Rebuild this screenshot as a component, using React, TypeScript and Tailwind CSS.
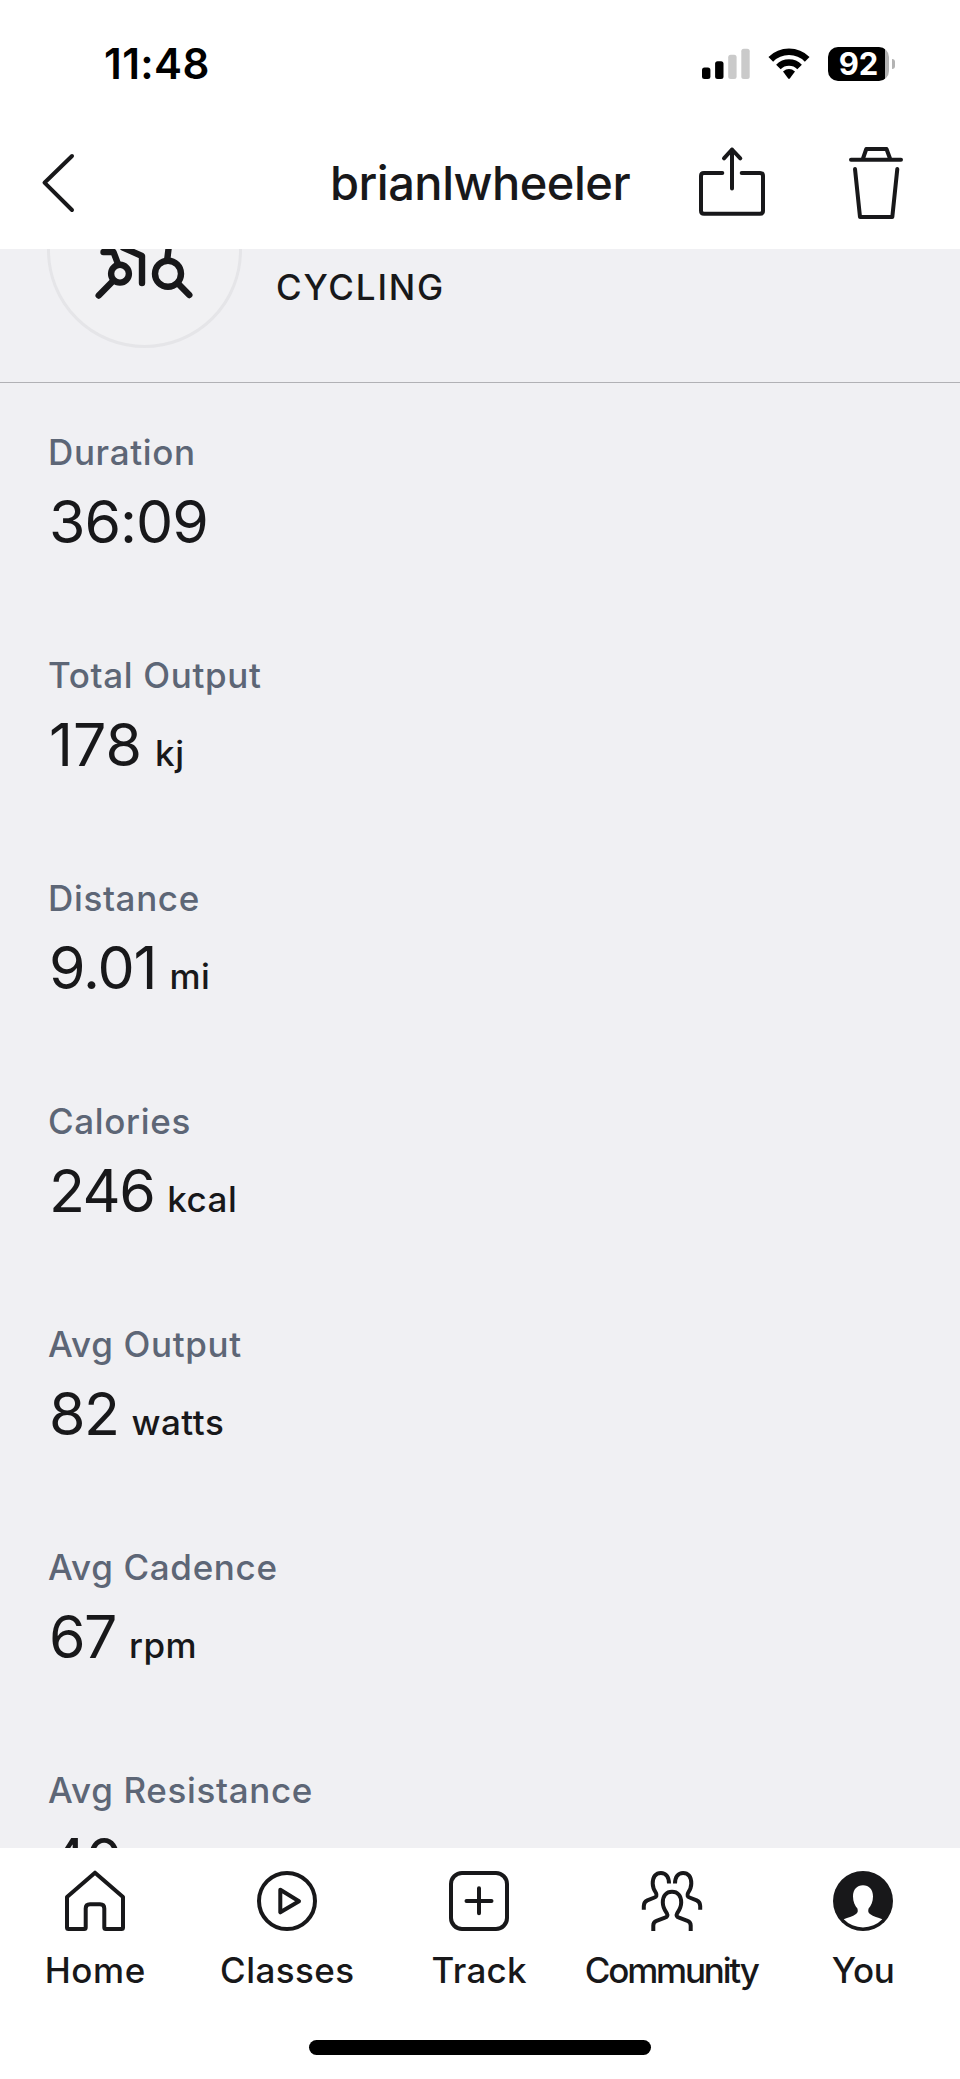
import React from "react";

type Metric = { label: string; value: string; unit?: string; spacing: string };

const metrics: Metric[] = [
  { label: "Duration", value: "36:09", spacing: "tracking-[-1px]" },
  { label: "Total Output", value: "178", unit: "kj", spacing: "tracking-[0px]" },
  { label: "Distance", value: "9.01", unit: "mi", spacing: "tracking-[-1.1px]" },
  { label: "Calories", value: "246", unit: "kcal", spacing: "tracking-[-1.5px]" },
  { label: "Avg Output", value: "82", unit: "watts", spacing: "tracking-[-1.5px]" },
  { label: "Avg Cadence", value: "67", unit: "rpm", spacing: "tracking-[-1.5px]" },
  { label: "Avg Resistance", value: "40", spacing: "tracking-[-1.5px]" },
];

const stroke = {
  fill: "none",
  stroke: "#18181a",
  strokeWidth: 4,
  strokeLinecap: "round" as const,
  strokeLinejoin: "round" as const,
};

const StatusBar: React.FC = () => (
  <div className="flex h-[128px] items-center justify-between pl-[104px] pr-[65px]">
    <span className="text-[42px] leading-[48px] font-semibold tracking-[0.4px] text-black">
      11:48
    </span>
    <div className="flex items-center">
      <svg width="48" height="32" viewBox="0 0 48 32">
        <rect x="0" y="19.5" width="8.4" height="11.5" rx="2.5" fill="#000" />
        <rect x="13.1" y="13.3" width="8.4" height="17.7" rx="2.5" fill="#000" />
        <rect x="26.2" y="6.8" width="8.4" height="24.2" rx="2.5" fill="#cacaca" />
        <rect x="39.3" y="0.7" width="8.4" height="30.3" rx="2.5" fill="#cacaca" />
      </svg>
      <svg className="ml-[18px]" width="42" height="32" viewBox="0 0 42 32">
        <path d="M2.8 11.3a25.7 25.7 0 0 1 36.4 0" fill="none" stroke="#000" strokeWidth="6.6" />
        <path d="M10.4 18.9a15 15 0 0 1 21.2 0" fill="none" stroke="#000" strokeWidth="6.4" />
        <path d="M15 23.4Q21 18.6 27 23.4L21.8 30.6Q21 31.3 20.2 30.6Z" fill="#000" />
      </svg>
      <div className="ml-[18px] flex items-center">
        <div className="flex h-[34px] w-[61px] items-center justify-center rounded-[10px] bg-[linear-gradient(to_right,#000_57px,#b3b3b3_57px)]">
          <span className="text-[31px] leading-[34px] font-bold text-white">
            92
          </span>
        </div>
        <div className="ml-[3px] h-[10px] w-[3px] rounded-r-full bg-[#b3b3b3]" />
      </div>
    </div>
  </div>
);

const Header: React.FC = () => (
  <div className="flex h-[121px] items-start pl-[40px]">
    <button className="mt-[25px]">
      <svg width="36" height="60" viewBox="0 0 36 60" {...stroke}>
        <path d="M32 3 4.5 29.7 32 57" />
      </svg>
    </button>
    <h1 className="mt-[27px] ml-[254px] w-[302px] text-[47px] leading-[56px] font-medium whitespace-nowrap tracking-[-0.5px] text-[#18181a]">
      brianlwheeler
    </h1>
    <button className="mt-[17px] ml-[64px]">
      <svg width="72" height="74" viewBox="696 145 72 74" {...stroke}>
        <path d="M722.3 173H704Q701 173 701 176V210.700Q701 213.700 704 213.700H760Q763 213.700 763 210.700V176Q763 173 760 173H741.700" />
        <path d="M732 188.500V149.500M724 158.300 732 149.500 740.300 158.300" />
      </svg>
    </button>
    <button className="mt-[17px] ml-[79px]">
      <svg width="58" height="76" viewBox="847 145 58 76" {...stroke}>
        <path d="M851 159.700H901M863 158.500 866.300 149H886.500L890 158.500" />
        <path d="M855 169 860 217H892.300L897.300 169" />
      </svg>
    </button>
  </div>
);

const Activity: React.FC = () => (
  <div className="flex h-[134px] shrink-0 border-b border-[#b1b1b5]">
    <div className="mt-[-96px] ml-[47px] h-[195px] w-[195px] shrink-0 rounded-full border-[3px] border-[#e5e5e8] bg-[#f1f1f3]">
      <svg width="189" height="189" viewBox="50 156 189 189" {...stroke} strokeWidth={6.4}>
        <circle cx="120" cy="273.700" r="8.900" />
        <circle cx="168" cy="273.700" r="13" />
        <path d="M112.500 281.500 98.700 295.500M179 284.500 189.300 295" />
        <path d="M103.500 252H113.500L118 264" />
        <path d="M123 247.500 142 256V283" />
        <path d="M169 245 167.300 259" />
      </svg>
    </div>
    <p className="mt-[17px] ml-[34px] text-[35px] leading-[42px] font-[450] tracking-[1.8px] text-[#18181a]">
      CYCLING
    </p>
  </div>
);

const MetricRow: React.FC<Metric> = ({ label, value, unit, spacing }) => (
  <div className="h-[223px] shrink-0">
    <p className="text-[35px] leading-[44px] font-medium tracking-[0.65px] text-[#5d6676]">{label}</p>
    <p className="mt-[16px] ml-px flex items-baseline leading-[64px] text-[#18181a]">
      <span className={`text-[59px] ${spacing}`}>{value}</span>
      {unit && <span className="ml-[13px] text-[35px] font-medium tracking-[0.5px]">{unit}</span>}
    </p>
  </div>
);

const HomeIcon = () => (
  <path d="M31 3.700 3 28V58.500Q3 60 4.500 60H20.200Q21.700 60 21.700 58.500V39.500Q21.700 35.300 26 35.300H36Q40.300 35.300 40.300 39.500V58.500Q40.300 60 41.800 60H57.500Q59 60 59 58.500V28Z" />
);

const ClassesIcon = () => (
  <>
    <circle cx="31" cy="32" r="28" />
    <path d="M24.300 20.700 43 32.200 24.300 43.300Z" />
  </>
);

const TrackIcon = () => (
  <>
    <rect x="3" y="4" width="56" height="56" rx="11" />
    <path d="M31 19.300V44.300M18.500 32H43.500" />
  </>
);

const CommunityIcon = () => (
  <g strokeLinecap="butt">
    <path d="M13.300 62V56.500Q13.300 53 16.500 51.800L25 48.700Q28.500 47.400 26.800 44.300C24.800 41.300 22.800 38.500 22.800 33.500C22.800 26.500 26.500 22.800 32 22.800S41.200 26.500 41.200 33.500C41.200 38.500 39.200 41.300 37.200 44.300Q35.500 47.400 39 48.700L47.500 51.800Q50.700 53 50.700 56.500V62" />
    <path d="M3.800 40.700V37Q3.800 32.800 7.300 31.300L14.500 28.500Q17.500 27.300 16 24C14 21 12.700 18.500 12.700 14.500C12.700 7.500 16 3.900 20.900 3.900S29 7.800 29 14.500" />
    <path d="M60.200 40.700V37Q60.200 32.800 56.700 31.300L49.500 28.500Q46.500 27.300 48 24C50 21 51.300 18.500 51.300 14.500C51.300 7.500 48 3.900 43.100 3.900S35 7.800 35 14.500" />
  </g>
);

const YouIcon = () => (
  <g stroke="none">
    <circle cx="31" cy="32" r="30" fill="#18181a" />
    <path
      d="M31 16.300C37 16.300 41 20.500 41 27.500C41 33 39 36.500 36.600 39.500C36 42 36 43.500 38 45C41.500 47.500 46 48.500 50.300 50.200A26.800 26.800 0 0 1 11.700 50.200C16 48.500 20.500 47.500 24 45C26 43.500 26 42 25.400 39.500C23 36.500 21 33 21 27.500C21 20.500 25 16.300 31 16.300Z"
      fill="#fff"
    />
  </g>
);

const tabs = [
  { label: "Home", Icon: HomeIcon, text: "tracking-[0.6px]" },
  { label: "Classes", Icon: ClassesIcon, text: "tracking-[0.4px]" },
  { label: "Track", Icon: TrackIcon, text: "tracking-[0.3px]" },
  { label: "Community", Icon: CommunityIcon, text: "tracking-[-2.2px]" },
  { label: "You", Icon: YouIcon, text: "tracking-[-0.2px]" },
];

const TabBar: React.FC = () => (
  <nav className="flex h-[231px] shrink-0 flex-col items-center bg-white">
    <div className="grid w-full grid-cols-5">
      {tabs.map(({ label, Icon, text }) => (
        <div key={label} className="flex flex-col items-center pt-[21px]">
          <svg width="64" height="64" viewBox="0 0 64 64" {...stroke}>
            <Icon />
          </svg>
          <span className={`mt-[15px] mr-[1.5px] text-[35px] leading-[44px] font-medium text-[#18181a] ${text}`}>
            {label}
          </span>
        </div>
      ))}
    </div>
    <div className="mt-[48px] h-[15px] w-[342px] rounded-full bg-black" />
  </nav>
);

const App: React.FC = () => {
  return (
    <div className="flex h-[2079px] w-[960px] flex-col overflow-hidden bg-white font-['Inter',sans-serif]">
      <StatusBar />
      <Header />
      <main className="flex min-h-0 flex-1 flex-col overflow-hidden bg-[#f0f0f3]">
        <Activity />
        <section className="flex flex-col pt-[47px] pl-[48px]">
          {metrics.map((m) => (
            <MetricRow key={m.label} {...m} />
          ))}
        </section>
      </main>
      <TabBar />
    </div>
  );
};

export default App;
